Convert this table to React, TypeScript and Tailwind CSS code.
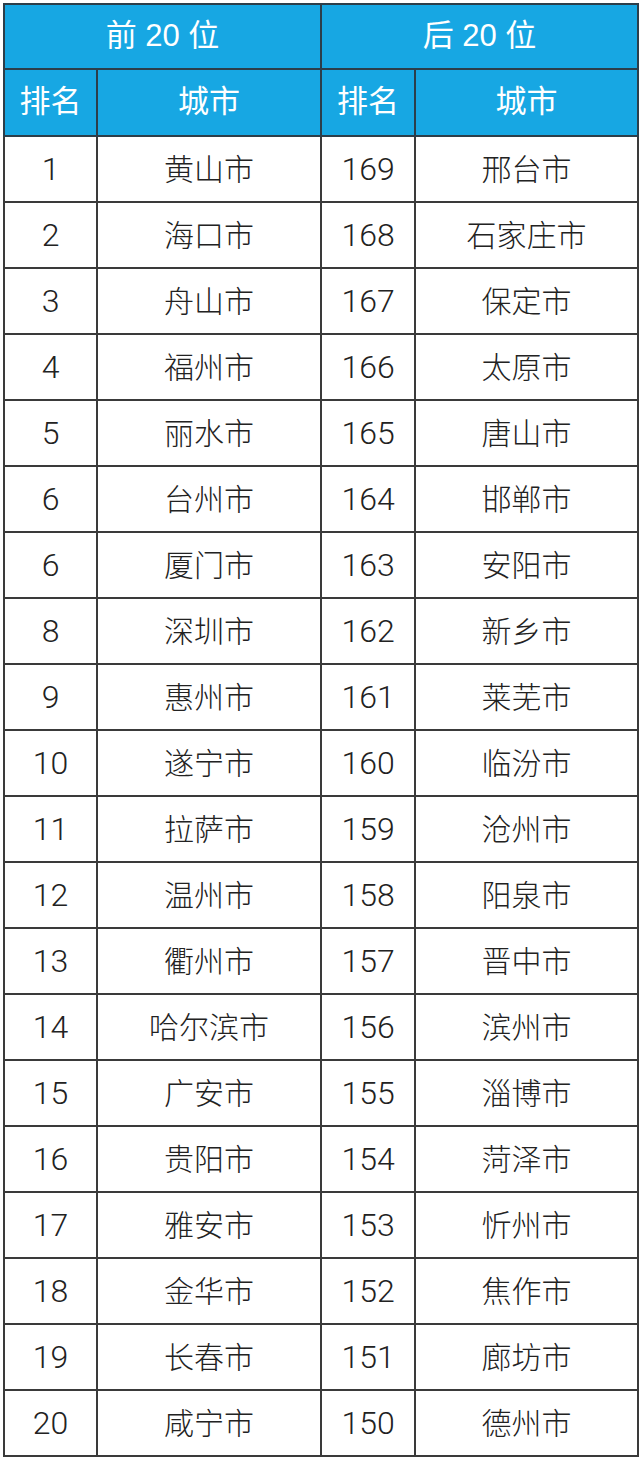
import React from 'react'

const top = ['黄山市', '海口市', '舟山市', '福州市', '丽水市', '台州市', '厦门市', '深圳市', '惠州市', '遂宁市', '拉萨市', '温州市', '衢州市', '哈尔滨市', '广安市', '贵阳市', '雅安市', '金华市', '长春市', '咸宁市']
const topRank = [1, 2, 3, 4, 5, 6, 6, 8, 9, 10, 11, 12, 13, 14, 15, 16, 17, 18, 19, 20]
const bottom = ['邢台市', '石家庄市', '保定市', '太原市', '唐山市', '邯郸市', '安阳市', '新乡市', '莱芜市', '临汾市', '沧州市', '阳泉市', '晋中市', '滨州市', '淄博市', '菏泽市', '忻州市', '焦作市', '廊坊市', '德州市']

export default function App() {
    const cell = 'border-2 border-[#3a3a3a] text-center align-middle'
    const head = 'border-2 border-[#2c3e4a] bg-[#17a7e3] text-white text-center align-middle text-[31px] font-normal'

    return (
        <div
            className="bg-white p-[3px] w-[640px]"
            style={{ fontFamily: '"Liberation Sans", "Noto Sans CJK SC", sans-serif' }}
        >
            <table className="border-collapse w-[634px] table-fixed">
                <colgroup>
                    <col className="w-[93px]" />
                    <col className="w-[224px]" />
                    <col className="w-[94px]" />
                    <col className="w-[223px]" />
                </colgroup>
                <thead>
                    <tr className="h-[65px]">
                        <th colSpan={2} className={head}>前 20 位</th>
                        <th colSpan={2} className={head}>后 20 位</th>
                    </tr>
                    <tr className="h-[67px]">
                        <th className={head}>排名</th>
                        <th className={head}>城市</th>
                        <th className={head}>排名</th>
                        <th className={head}>城市</th>
                    </tr>
                </thead>
                <tbody
                    className="text-[30px] text-[#222] font-light"
                    style={{ fontFamily: 'Roboto, "Noto Sans CJK SC", sans-serif' }}
                >
                    {top.map((city, i) => (
                        <tr key={i} className="h-[66px]">
                            <td className={cell + ' text-[32px]'}>{topRank[i]}</td>
                            <td className={cell}>{city}</td>
                            <td className={cell + ' text-[32px]'}>{169 - i}</td>
                            <td className={cell}>{bottom[i]}</td>
                        </tr>
                    ))}
                </tbody>
            </table>
        </div>
    )
}
